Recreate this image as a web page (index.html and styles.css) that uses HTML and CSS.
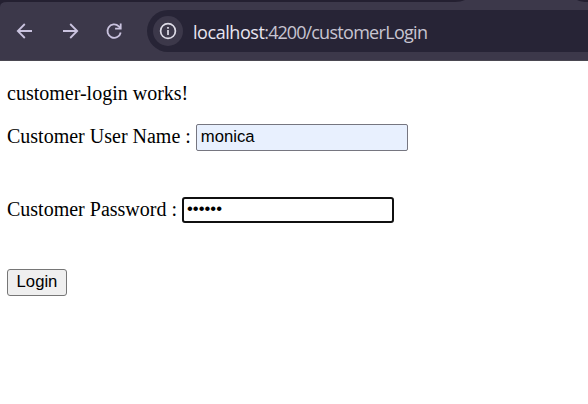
FILE: index.html
```html
<!DOCTYPE html>
<html lang="en">
<head>
<meta charset="utf-8">
<title>Customer Login</title>
<link rel="stylesheet" href="styles.css">
</head>
<body>
<header class="browser">
  <svg class="tabs" viewBox="0 0 588 8"><path d="M0 8V7Q0 2 7 2H455Q461 2 465 0H577Q581 2 588 2V8Z"/></svg>
  <div class="toolbar">
    <svg class="nav" viewBox="0 0 20 20"><path d="M17 10H3M9.8 3L2.8 10l7 7"/></svg>
    <svg class="nav" viewBox="0 0 20 20"><path d="M3 10h14M10.2 3l7 7-7 7"/></svg>
    <svg class="nav" viewBox="0 0 20 20"><path d="M16.7 11.5A6.7 6.7 0 1 1 14.8 5.3L16.7 7.2M16.7 2.5v5.2h-5.6"/></svg>
    <div class="address">
      <span class="site-info"><svg viewBox="0 0 18 18"><circle cx="9" cy="9" r="7.4"/><path d="M9 8v5M9 5v1.8"/></svg></span>
      <span class="url"><span class="host">localhost</span><span class="port">:4200/</span><span class="path">customerLogin</span></span>
    </div>
  </div>
</header>
<main class="page">
  <p class="status">customer-login works!</p>
  <form class="login">
    <div class="field"><label for="user">Customer User Name :</label><input class="input filled" id="user" type="text" value="monica"></div>
    <div class="field"><label for="password">Customer Password :</label><input class="input active" id="password" type="password" value="monica"></div>
    <button class="submit" type="button">Login</button>
  </form>
</main>
</body>
</html>
```
FILE: styles.css
```css
* { box-sizing: border-box; }
body { margin: 0; background: #fff; color: #000; font: 20px/23px "Liberation Serif", serif; overflow: hidden; }
.browser { height: 61px; background: #3c384a; border-bottom: 1px solid #4a4851; }
.tabs { display: block; width: 588px; height: 8px; background: #242031; fill: #3c384a; }
.toolbar { display: flex; align-items: flex-start; padding: 2px 0 0 15px; }
.nav { width: 20px; height: 20px; margin: 10.5px 24.5px 0 0; fill: none; stroke: #cac3df; stroke-width: 1.8; }
.address { display: flex; align-items: center; flex: 1; height: 42px; margin-left: -1.5px; padding-left: 6px; border-radius: 21px 0 0 21px; background: #272436; }
.site-info { display: flex; align-items: center; justify-content: center; width: 30px; height: 30px; border-radius: 50%; background: #3c384a; }
.site-info svg { width: 18px; height: 18px; fill: none; stroke: #dedce7; stroke-width: 1.7; }
.url { margin: 1px 0 0 10px; color: #c7c4d1; font: 18px/24px "Open Sans", sans-serif; white-space: nowrap; }
.host { color: #e8e5f0; letter-spacing: -0.45px; }
.port { letter-spacing: -0.95px; }
.path { letter-spacing: -0.7px; }
.page { padding: 21px 7px; }
.status { margin: 0 0 19px; }
.login { display: flex; flex-direction: column; align-items: flex-start; }
.field { display: flex; align-items: flex-start; height: 27px; margin-bottom: 46px; }
.field label { padding-top: 1px; }
.input { width: 212px; height: 27px; margin: 0 0 0 5px; padding: 1px 3px 2px 4px; border: 1px solid #767680; border-radius: 2px; outline: 0; color: #000; font: 16.67px/20px "Liberation Sans", sans-serif; }
.filled { background: #e8f0fe; }
.active { height: 26px; padding: 0 2px 2px 3px; border: 2px solid #101010; border-radius: 3px; background: #fff; }
.submit { width: 60px; height: 27px; margin-top: -1px; padding: 0 0 2px; border: 1px solid #767676; border-radius: 3px; background: #efefef; color: #000; font: 16.67px/20px "Liberation Sans", sans-serif; }
```
